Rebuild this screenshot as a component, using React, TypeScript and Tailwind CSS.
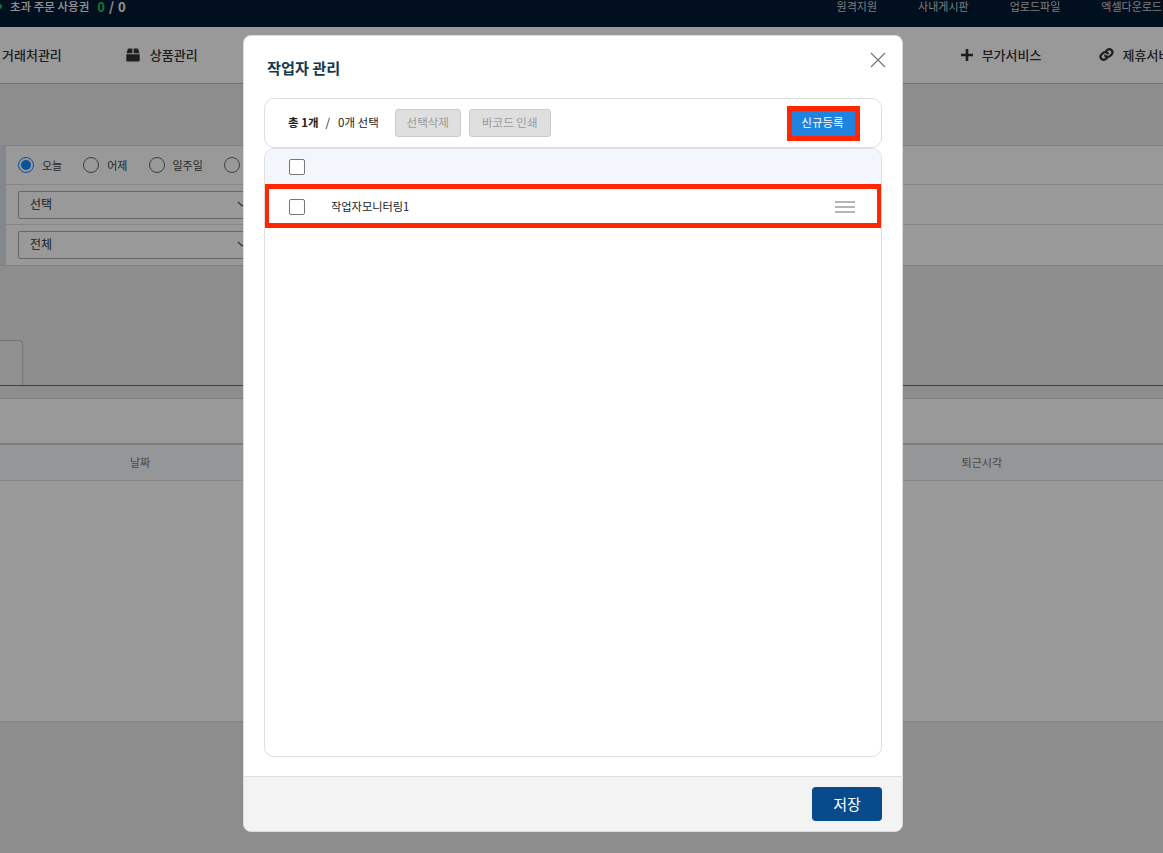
import React from "react";

const font = { fontFamily: '"Noto Sans CJK KR", "Noto Sans", sans-serif' };

function Radio({ label, checked, className }: { label?: string; checked?: boolean; className?: string }) {
  return (
    <div className={`flex items-center ${className ?? ""}`}>
      <span className={`flex h-[16px] w-[16px] shrink-0 items-center justify-center rounded-full border-[1.5px] ${checked ? "border-[#1087ff]" : "border-[#6b6b6b]"}`}>
        {checked && <span className="h-[10px] w-[10px] rounded-full bg-[#1087ff]" />}
      </span>
      {label && <span className="ml-[8px] text-[11px] text-[#444]">{label}</span>}
    </div>
  );
}

function Select({ label }: { label: string }) {
  return (
    <div className="flex h-[28px] w-[236px] items-center justify-between rounded-[2px] border border-[#aaa] bg-white pl-[11px] pr-[6px] pb-[3px]">
      <span className="text-[12px] text-[#333]">{label}</span>
      <svg width="10" height="6" viewBox="0 0 10 6" fill="none" stroke="#555" strokeWidth="1.2"><path d="M1 1l4 4 4-4" /></svg>
    </div>
  );
}

function CheckBox() {
  return <span className="block h-[16px] w-[16px] shrink-0 rounded-[2px] border border-[#777] bg-white" />;
}

export default function App() {
  return (
    <div className="relative h-[853px] w-[1163px] overflow-hidden bg-[#ebebeb]" style={font}>
      {/* Top bar */}
      <header className="flex h-[27px] items-start overflow-hidden bg-[#041a32] text-white">
        <span className="ml-[-3px] mt-[4px] h-[5px] w-[5px] shrink-0 rounded-full bg-[#22c55e]" />
        <span className="ml-[8px] text-[11.5px] font-medium leading-[13px] text-[#f4f4f4]">초과 주문 사용권</span>
        <span className="ml-[8px] text-[13px] font-bold leading-[13px] text-[#22c55e]">0</span>
        <span className="ml-[4px] text-[13px] font-bold leading-[13px] tracking-[0.5px] text-[#f4f4f4]">/ 0</span>
        <nav className="ml-auto mr-[1px] flex shrink-0 gap-[41px] whitespace-nowrap text-[11px] leading-[13px] text-[#cfcfcf]">
          <span>원격지원</span>
          <span>사내게시판</span>
          <span>업로드파일</span>
          <span>엑셀다운로드</span>
        </nav>
      </header>

      {/* Main nav */}
      <nav className="flex h-[57px] items-center overflow-hidden whitespace-nowrap border-b border-[#bdbdbd] bg-white pb-[1px] text-[13px] font-medium text-[#333]">
        <span className="ml-[2px] shrink-0">거래처관리</span>
        <svg className="ml-[64px] shrink-0" width="14" height="14" viewBox="0 0 14 14" fill="#333">
          <path d="M0.5 5.3 L1.8 1.2 Q2 0.6 2.7 0.6 H6.4 V5.3 Z" />
          <path d="M7.6 0.6 H11.3 Q12 0.6 12.2 1.2 L13.5 5.3 H7.6 Z" />
          <path d="M0.3 6.3 H13.7 V12.4 Q13.7 13.5 12.6 13.5 H1.4 Q0.3 13.5 0.3 12.4 Z" />
        </svg>
        <span className="ml-[10px] shrink-0">상품관리</span>
        <svg className="ml-[763px] shrink-0" width="12" height="12" viewBox="0 0 12 12" fill="#333">
          <path d="M4.7 0h2.6v4.7H12v2.6H7.3V12H4.7V7.3H0V4.7h4.7z" />
        </svg>
        <span className="ml-[9px] shrink-0">부가서비스</span>
        <svg className="ml-[58px] shrink-0" width="15" height="15" viewBox="0 0 24 24" fill="none" stroke="#333" strokeWidth="3.6" strokeLinecap="round">
          <path d="M10 14a5 5 0 0 0 7.5.5l3-3a5 5 0 0 0-7-7l-1.7 1.7" />
          <path d="M14 10a5 5 0 0 0-7.5-.5l-3 3a5 5 0 0 0 7 7l1.7-1.7" />
        </svg>
        <span className="ml-[8px] shrink-0">제휴서비스</span>
      </nav>

      {/* Filter panel */}
      <section className="mt-[61px] border-y border-[#d4d4d4] bg-white">
        <div className="flex h-[38px] items-center border-l-[6px] border-[#dde3ec] pl-[12px]">
          <Radio label="오늘" checked />
          <Radio label="어제" className="ml-[21px]" />
          <Radio label="일주일" className="ml-[21px]" />
          <Radio className="ml-[21px]" />
        </div>
        <div className="flex h-[40px] items-center border-t border-l-[6px] border-[#dedede] border-l-[#dde3ec] pl-[12px] pt-px">
          <Select label="선택" />
        </div>
        <div className="flex h-[41px] items-center border-t border-l-[6px] border-[#dedede] border-l-[#dde3ec] pl-[12px]">
          <Select label="전체" />
        </div>
      </section>

      {/* Tabs */}
      <div className="mt-[74px] h-[46px] border-b border-[#1a7af0]">
        <div className="h-[45px] w-[23px] rounded-tr-[4px] border-r border-t border-[#c4c4c4] bg-[#f1f1f1]" />
      </div>

      {/* Table */}
      <section className="mt-[12px] border-t border-[#d4d4d4]">
        <div className="h-[44px] bg-white" />
        <div className="grid h-[37px] grid-cols-[281px_1fr_360px] items-center border-t-2 border-[#d0d0d0] bg-[#f8fafd] text-[11px] text-[#777]">
          <span className="pl-[130px]">날짜</span>
          <span />
          <span className="justify-self-end pr-[161px]">퇴근시각</span>
        </div>
        <div className="h-[242px] border-y border-[#dcdcdc] bg-white" />
      </section>

      {/* Dim overlay */}
      <div className="absolute inset-0 bg-black/40" />

      {/* Modal */}
      <div className="absolute left-[243px] top-[35px] flex h-[797px] w-[660px] flex-col overflow-hidden rounded-[8px] border border-[#dcdcdc] bg-white">
        <div className="relative flex h-[62px] shrink-0 items-center pl-[23px] pt-px">
          <h1 className="text-[15.2px] font-bold text-[#0f3a52]">작업자 관리</h1>
          <svg className="absolute right-[16px] top-[16px]" width="16" height="16" viewBox="0 0 16 16" stroke="#777" strokeWidth="1.2" fill="none">
            <path d="M1 1l14 14M15 1L1 15" />
          </svg>
        </div>

        <div className="mx-[20px] flex min-h-0 flex-1 flex-col">
          {/* Toolbar */}
          <div className="flex h-[50px] shrink-0 items-center rounded-[10px] border border-[#dedede] pl-[23px] pr-[21px] text-[11.5px] text-[#222]">
            <span className="font-bold">총 1개</span>
            <span className="ml-[7px]">/</span>
            <span className="ml-[8px]">0개 선택</span>
            <button className="ml-[16px] h-[28px] w-[66px] rounded-[3px] border border-[#ccc] bg-[#dfdfdf] text-[11.5px] text-[#999]">선택삭제</button>
            <button className="ml-[8px] h-[28px] w-[82px] rounded-[3px] border border-[#ccc] bg-[#dfdfdf] text-[11.5px] text-[#999]">바코드 인쇄</button>
            <button className="ml-auto h-[35px] w-[73px] border-[5px] border-[#ff2600] bg-[#1e82e0] pr-[2px] text-[11.5px] text-white">신규등록</button>
          </div>

          {/* List */}
          <div className="flex min-h-0 flex-1 flex-col overflow-hidden rounded-[10px] border border-[#dedede]">
            <div className="flex h-[35px] shrink-0 items-center bg-[#f3f7fd] pl-[24px]">
              <CheckBox />
            </div>
            <div className="-mx-px flex h-[44px] shrink-0 items-center border-[5px] border-[#ff2600] pl-[20px] pr-[22px] pt-[2px]">
              <CheckBox />
              <span className="ml-[26px] -mt-[2px] text-[11.2px] text-[#222]">작업자모니터링1</span>
              <span className="ml-auto flex w-[20px] flex-col gap-[3px]">
                <span className="h-[2px] bg-[#b5b5b5]" />
                <span className="h-[2px] bg-[#b5b5b5]" />
                <span className="h-[2px] bg-[#b5b5b5]" />
              </span>
            </div>
          </div>
        </div>

        {/* Footer */}
        <div className="mt-[19px] flex h-[55px] shrink-0 items-center justify-end border-t border-[#dedede] bg-[#f3f3f3] pr-[20px]">
          <button className="h-[34px] w-[70px] rounded-[4px] bg-[#074b8c] text-[15px] text-white">저장</button>
        </div>
      </div>
    </div>
  );
}
